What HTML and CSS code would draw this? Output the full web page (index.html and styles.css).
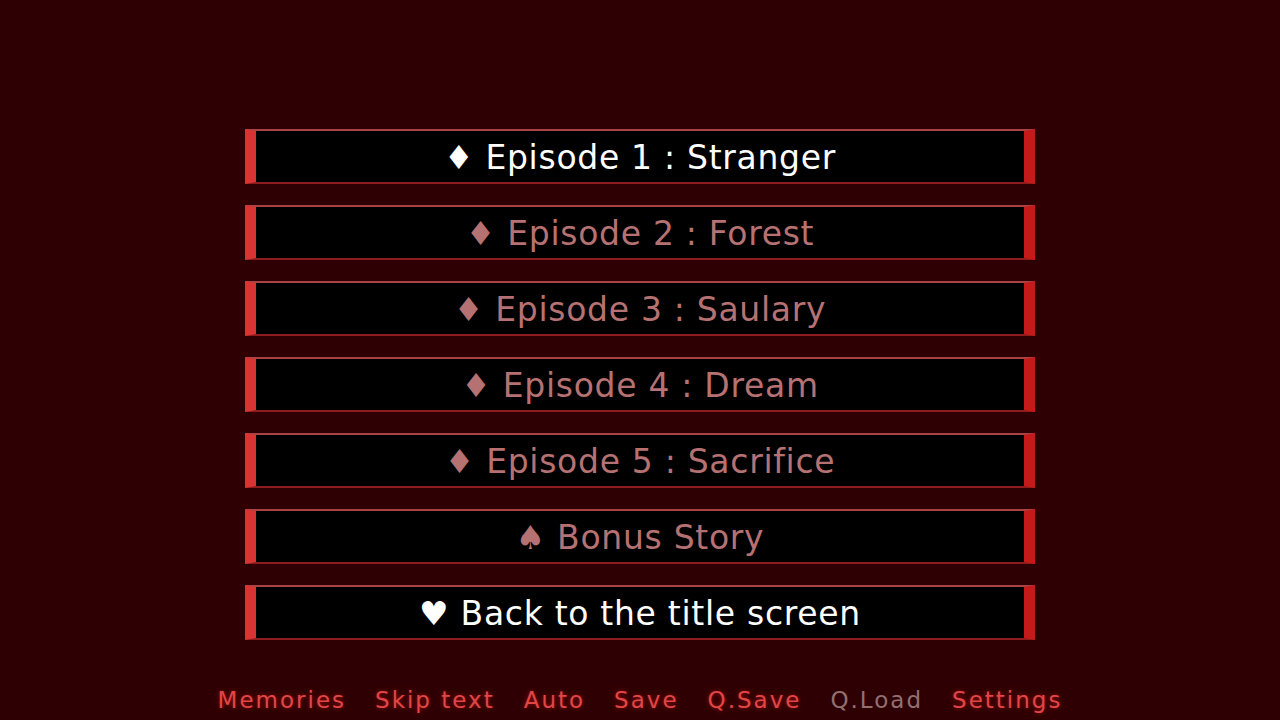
FILE: index.html
```html
<!DOCTYPE html>
<html>
<head>
<meta charset="utf-8">
<link rel="stylesheet" href="styles.css">
</head>
<body>
<div class="screen">
  <div class="menu">
    <div class="btn active">♦ Episode 1 : Stranger</div>
    <div class="btn">♦ Episode 2 : Forest</div>
    <div class="btn">♦ Episode 3 : Saulary</div>
    <div class="btn">♦ Episode 4 : Dream</div>
    <div class="btn">♦ Episode 5 : Sacrifice</div>
    <div class="btn">♠ Bonus Story</div>
    <div class="btn active">♥ Back to the title screen</div>
  </div>
  <div class="quick">
    <span class="qi">Memories</span>
    <span class="qi">Skip text</span>
    <span class="qi">Auto</span>
    <span class="qi">Save</span>
    <span class="qi">Q.Save</span>
    <span class="qi off">Q.Load</span>
    <span class="qi">Settings</span>
  </div>
</div>
</body>
</html>
```

FILE: styles.css
```css
html, body {
  margin: 0;
  padding: 0;
  background: #2f0003;
}
.screen {
  width: 1280px;
  height: 720px;
  display: flex;
  flex-direction: column;
  align-items: center;
  overflow: hidden;
}
.menu {
  margin-top: 129px;
  display: flex;
  flex-direction: column;
  gap: 21px;
}
.btn {
  box-sizing: border-box;
  width: 790px;
  height: 55px;
  padding-top: 2px;
  background: #000;
  border-left: 11px solid #d93434;
  border-right: 11px solid #c41a1a;
  border-top: 2px solid #a84444;
  border-bottom: 2px solid #8e1c1c;
  display: flex;
  align-items: center;
  justify-content: center;
  font-family: "DejaVu Sans", sans-serif;
  font-size: 33px;
  letter-spacing: 0.7px;
  color: #b67272;
  white-space: pre;
}
.btn.active {
  color: #ffffff;
}
.quick {
  margin-top: 46px;
  display: flex;
  gap: 29px;
  font-family: "DejaVu Sans", sans-serif;
  font-size: 23px;
  line-height: 28px;
  letter-spacing: 2px;
  color: #e04646;
}
.qi {
  text-shadow: 0 0 4px rgba(200, 20, 20, 0.7);
}
.qi.off {
  color: #927070;
  text-shadow: none;
}
```
